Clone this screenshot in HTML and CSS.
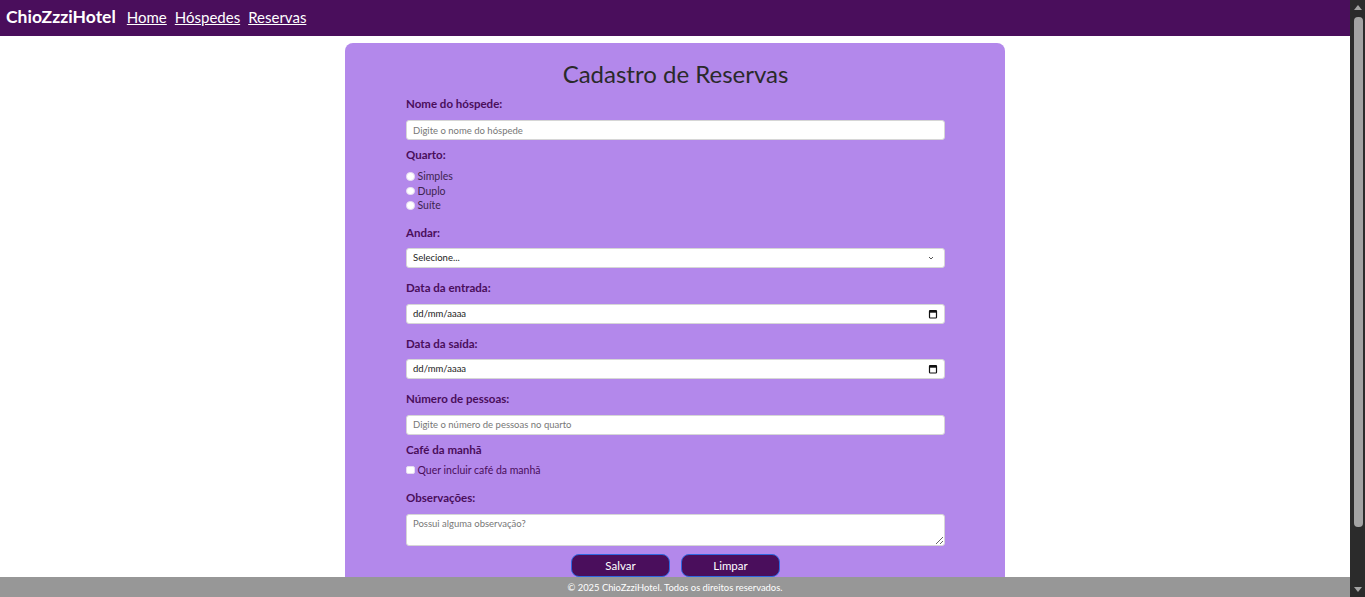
FILE: index.html
```html
<!DOCTYPE html>
<html lang="pt-BR">
<head>
<meta charset="utf-8">
<title>ChioZzziHotel - Reservas</title>
<link rel="stylesheet" href="styles.css">
</head>
<body>
<nav class="navbar">
  <span class="brand">ChioZzziHotel</span>
  <a class="nav-link" href="#">Home</a>
  <a class="nav-link" href="#">Hóspedes</a>
  <a class="nav-link" href="#">Reservas</a>
</nav>

<main class="card">
  <h1 class="title">Cadastro de Reservas</h1>
  <form class="form">
    <label class="label">Nome do hóspede:</label>
    <input class="field gap-s" type="text" placeholder="Digite o nome do hóspede">

    <label class="label">Quarto:</label>
    <div class="radios">
      <label class="option"><input class="radio" type="radio" name="q"> Simples</label>
      <label class="option"><input class="radio" type="radio" name="q"> Duplo</label>
      <label class="option"><input class="radio" type="radio" name="q"> Suíte</label>
    </div>

    <label class="label label-tight">Andar:</label>
    <div class="field select gap-l">
      <span class="value">Selecione...</span>
      <svg class="chev" width="8" height="6" viewBox="0 0 8 6"><path d="M2 2 L4 4 L6 2" fill="none" stroke="#555" stroke-width="1"/></svg>
    </div>

    <label class="label">Data da entrada:</label>
    <div class="field date gap-l">
      <span class="value">dd/mm/aaaa</span>
      <svg class="cal" width="10" height="10" viewBox="0 0 10 10"><rect x="1.5" y="1.5" width="7" height="7.5" rx="0.8" fill="none" stroke="#111" stroke-width="1.2"/><rect x="1.5" y="1.5" width="7" height="2.2" fill="#111"/></svg>
    </div>

    <label class="label label-tight">Data da saída:</label>
    <div class="field date gap-l">
      <span class="value">dd/mm/aaaa</span>
      <svg class="cal" width="10" height="10" viewBox="0 0 10 10"><rect x="1.5" y="1.5" width="7" height="7.5" rx="0.8" fill="none" stroke="#111" stroke-width="1.2"/><rect x="1.5" y="1.5" width="7" height="2.2" fill="#111"/></svg>
    </div>

    <label class="label">Número de pessoas:</label>
    <input class="field gap-s" type="text" placeholder="Digite o número de pessoas no quarto">

    <label class="label label-cafe">Café da manhã</label>
    <label class="option check-row"><input class="check" type="checkbox"> Quer incluir café da manhã</label>

    <label class="label">Observações:</label>
    <textarea class="field area" placeholder="Possui alguma observação?"></textarea>

    <div class="actions">
      <button class="btn" type="button">Salvar</button>
      <button class="btn" type="button">Limpar</button>
    </div>
  </form>
</main>

<footer class="footer">© 2025 ChioZzziHotel. Todos os direitos reservados.</footer>

<div class="scrollbar" aria-hidden="true">
  <span class="arrow arrow-up"></span>
  <div class="track"><div class="thumb"></div></div>
  <span class="arrow arrow-down"></span>
</div>
</body>
</html>
```
FILE: styles.css
```css
* { box-sizing: border-box; }
html, body { margin: 0; padding: 0; }
body {
  font-family: "Lato", "Noto Sans", sans-serif;
  background: #ffffff;
  color: #2b2b2b;
  margin-right: 15px;
}
.navbar {
  height: 36px;
  background: #4a0e5c;
  display: flex;
  align-items: center;
  padding: 0 0 3px 6px;
  gap: 8px;
}
.brand {
  color: #ffffff;
  font-weight: 700;
  font-size: 17.5px;
  margin-right: 3px;
}
.nav-link {
  color: #ffffff;
  font-size: 15px;
  text-decoration: underline;
}
.card {
  width: 660px;
  margin: 7px auto 20px;
  background: #b388eb;
  border-radius: 8px;
  padding: 16px 60px 20px 61px;
}
.title {
  margin: 0 0 8px;
  font-size: 24px;
  line-height: 30px;
  font-weight: 400;
  text-align: center;
  color: #2a2a2a;
}
.form {
  display: flex;
  flex-direction: column;
}
.label {
  display: block;
  font-size: 11.5px;
  line-height: 14px;
  font-weight: 700;
  color: #4a0e5c;
  margin-bottom: 9px;
}
.label-tight { margin-bottom: 8px; }
.field {
  width: 100%;
  height: 20px;
  background: #ffffff;
  border: 1px solid #d6d6d6;
  border-radius: 3px;
  font-family: inherit;
  font-size: 9.5px;
  padding: 0 6px;
  color: #222;
}
.field::placeholder { color: #777; }
.gap-s { margin-bottom: 8px; }
.gap-l { margin-bottom: 13px; }
.select, .date {
  display: flex;
  align-items: center;
  justify-content: space-between;
}
.value { font-size: 9.5px; color: #222; }
.chev { margin-right: 3px; }
.radios {
  display: flex;
  flex-direction: column;
  margin-top: -2px;
  margin-bottom: 13px;
}
.option {
  display: flex;
  align-items: center;
  gap: 3px;
  height: 14.5px;
  font-size: 10.5px;
  color: #3d2450;
}
.radio, .check {
  appearance: none;
  -webkit-appearance: none;
  margin: 0;
  width: 8.5px;
  height: 8.5px;
  background: #ffffff;
  border: 1px solid #e6dcf2;
}
.radio { border-radius: 50%; }
.check { border-radius: 2px; }
.label-cafe { margin-bottom: 6px; }
.check-row {
  margin-bottom: 14px;
  color: #4a0e5c;
}
.area {
  height: 32px;
  padding: 3px 6px;
  resize: vertical;
  margin-bottom: 8px;
  display: block;
}
.actions {
  display: flex;
  justify-content: center;
  gap: 11px;
}
.btn {
  width: 99px;
  height: 23px;
  background: #4a0e5c;
  color: #ffffff;
  border: 1.5px solid #2f68e0;
  border-radius: 8px;
  font-family: inherit;
  font-size: 11.5px;
}
.footer {
  position: fixed;
  left: 0;
  right: 15px;
  bottom: 0;
  height: 20px;
  background: #979797;
  color: #ffffff;
  font-size: 9.4px;
  display: flex;
  align-items: center;
  justify-content: center;
}
.scrollbar {
  position: fixed;
  top: 0;
  right: 0;
  bottom: 0;
  width: 15px;
  background: #2b2b2b;
  display: flex;
  flex-direction: column;
  align-items: center;
}
.arrow {
  width: 0;
  height: 0;
  border-left: 4px solid transparent;
  border-right: 4px solid transparent;
  margin: 5px 0 0;
}
.arrow-up { border-bottom: 5px solid #a3a3a3; }
.arrow-down { border-top: 5px solid #a3a3a3; margin: 0 0 5px; }
.track {
  flex: 1;
  width: 100%;
  padding: 7px 2px 0 4px;
}
.thumb {
  width: 9px;
  height: 510px;
  background: #a3a3a3;
  border-radius: 4px;
}
```
